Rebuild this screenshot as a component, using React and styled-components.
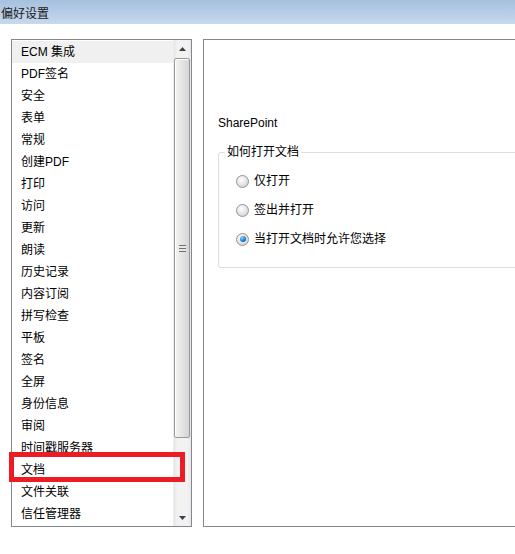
import React from 'react'
import styled, { createGlobalStyle } from 'styled-components'

const GlobalStyle = createGlobalStyle`
  html, body {
    margin: 0;
    padding: 0;
    background: #fff;
  }
  body {
    font-family: "Liberation Sans", "Noto Sans CJK SC", sans-serif;
    font-size: 12px;
    color: #000;
  }
`

const Window = styled.div`
  width: 515px;
  height: 554px;
  overflow: hidden;
  background: #fff;
`

const TitleBar = styled.div`
  height: 24px;
  display: flex;
  align-items: center;
  padding-left: 1px;
  font-size: 12px;
  background: linear-gradient(to bottom, #a6c0df 0%, #b9cfe8 60%, #c7d9ee 100%);
  color: #1a1a1a;
`

const Body = styled.div`
  display: flex;
  gap: 11px;
  padding: 15px 0 0 11px;
`

const ListBox = styled.div`
  position: relative;
  flex-shrink: 0;
  width: 179px;
  height: 486px;
  border: 1px solid #828790;
  display: flex;
`

const Rows = styled.div`
  flex: 1;
  padding-top: 1px;
`

const Row = styled.div`
  height: 22px;
  line-height: 23px;
  padding-left: 9px;
  background: ${p => (p.$active ? '#f0f0f0' : 'transparent')};
  white-space: nowrap;
`

const Scrollbar = styled.div`
  width: 17px;
  flex-shrink: 0;
  display: flex;
  flex-direction: column;
  background: linear-gradient(to right, #e6e6e6 0%, #f2f2f2 20%, #f2f2f2 80%, #e6e6e6 100%);
  border-left: 1px solid #ececec;
`

const Arrow = styled.div`
  height: 17px;
  display: flex;
  align-items: center;
  justify-content: center;
`

const Track = styled.div`
  flex: 1;
  display: flex;
  flex-direction: column;
  padding: 1px 1px 0 0;
`

const Thumb = styled.div`
  height: 378px;
  border: 1px solid #9a9a9a;
  border-radius: 2px;
  background: linear-gradient(to right, #f4f4f4 0%, #e6e6e6 45%, #d4d4d4 100%);
  box-shadow: inset 1px 1px 0 #fff;
  display: flex;
  align-items: center;
  justify-content: center;
`

const Grip = styled.div`
  width: 7px;
  height: 7px;
  background: repeating-linear-gradient(to bottom, #6f6f6f 0 1px, #e8e8e8 1px 3px);
`

const Highlight = styled.div`
  position: absolute;
  left: -3px;
  top: 412px;
  width: 166px;
  height: 20px;
  border: 5px solid #ed1c24;
  pointer-events: none;
`

const Panel = styled.div`
  flex-shrink: 0;
  width: 330px;
  height: 488px;
  box-sizing: border-box;
  border: 1px solid #828790;
  padding: 75px 0 0 14px;
`

const Heading = styled.div`
  line-height: 16px;
`

const Group = styled.fieldset`
  margin: 14px 0 0 0;
  padding: 0 0 20px 6px;
  border: 1px solid #d5dfe5;
  border-radius: 3px;
`

const Legend = styled.legend`
  padding: 0 2px;
  line-height: 14px;
`

const Options = styled.div`
  display: flex;
  flex-direction: column;
  gap: 13px;
  padding: 14px 0 0 11px;
`

const Option = styled.label`
  display: flex;
  align-items: center;
  gap: 5px;
  line-height: 16px;
`

const Radio = styled.span`
  width: 11px;
  height: 11px;
  border-radius: 50%;
  border: 1px solid #949494;
  background: radial-gradient(circle at 40% 35%, #ffffff 0%, #e2e2e2 55%, #c2c2c2 100%);
  display: flex;
  align-items: center;
  justify-content: center;
  &::after {
    content: '';
    display: ${p => (p.$checked ? 'block' : 'none')};
    width: 6px;
    height: 6px;
    border-radius: 50%;
    background: radial-gradient(circle at 35% 30%, #8fd0ff 0%, #1a7fd0 55%, #0a4f8f 100%);
  }
`

const items = [
  'ECM 集成', 'PDF签名', '安全', '表单', '常规', '创建PDF', '打印', '访问',
  '更新', '朗读', '历史记录', '内容订阅', '拼写检查', '平板', '签名', '全屏',
  '身份信息', '审阅', '时间戳服务器', '文档', '文件关联', '信任管理器',
]

const options = ['仅打开', '签出并打开', '当打开文档时允许您选择']

const ArrowIcon = ({ up }) => (
  <svg width="7" height="4" viewBox="0 0 7 4">
    <path d={up ? 'M0 4 L3.5 0 L7 4 Z' : 'M0 0 L3.5 4 L7 0 Z'} fill="#404040" />
  </svg>
)

export default function App() {
  return (
    <Window>
      <GlobalStyle />
      <TitleBar>偏好设置</TitleBar>
      <Body>
        <ListBox>
          <Rows>
            {items.map((t, i) => (
              <Row key={t} $active={i === 0}>{t}</Row>
            ))}
          </Rows>
          <Scrollbar>
            <Arrow><ArrowIcon up /></Arrow>
            <Track>
              <Thumb><Grip /></Thumb>
            </Track>
            <Arrow><ArrowIcon /></Arrow>
          </Scrollbar>
          <Highlight />
        </ListBox>
        <Panel>
          <Heading>SharePoint</Heading>
          <Group>
            <Legend>如何打开文档</Legend>
            <Options>
              {options.map((o, i) => (
                <Option key={o}>
                  <Radio $checked={i === 2} />
                  {o}
                </Option>
              ))}
            </Options>
          </Group>
        </Panel>
      </Body>
    </Window>
  )
}
